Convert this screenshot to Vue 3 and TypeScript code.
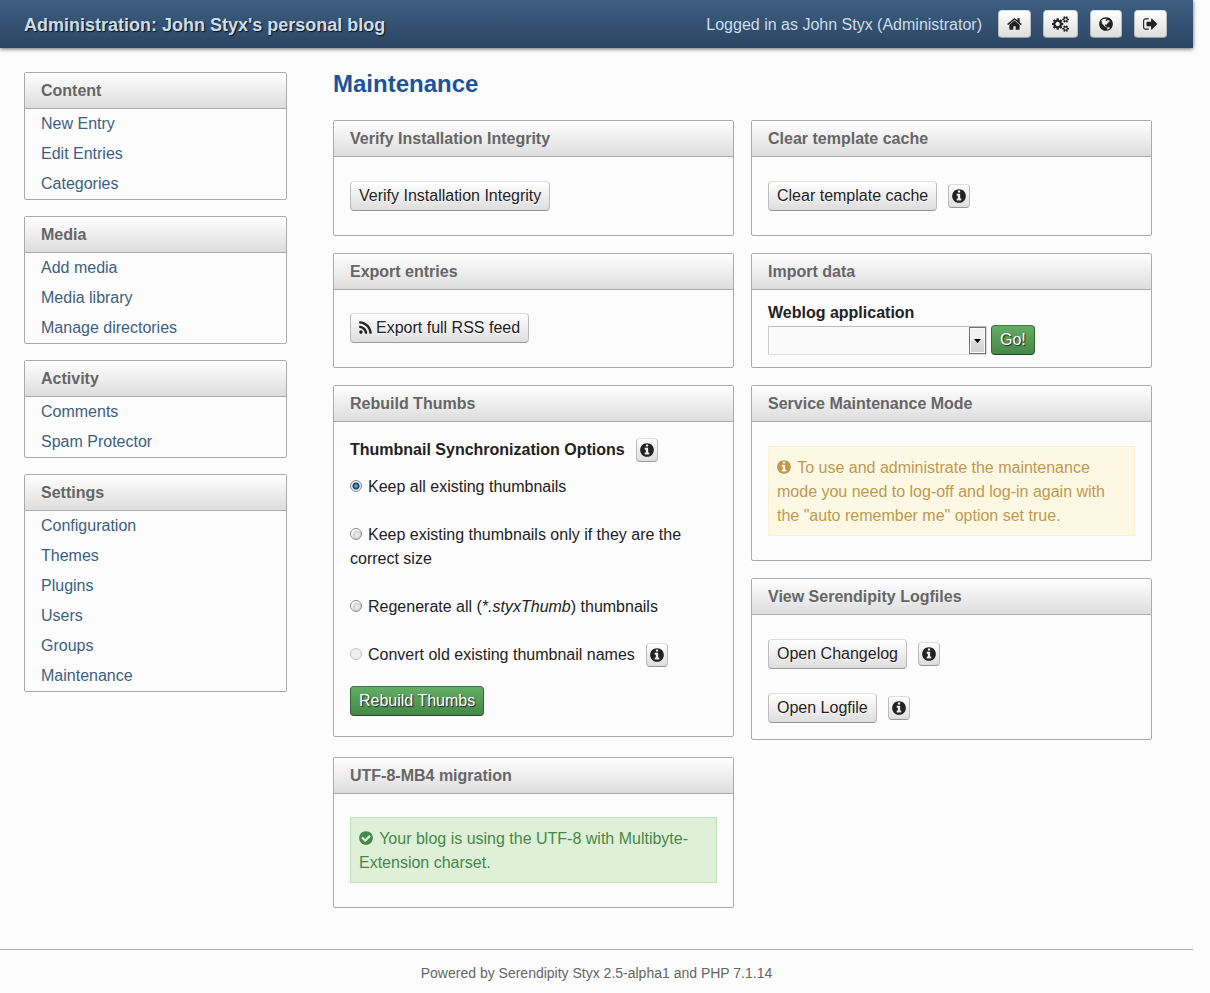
<script setup lang="ts">
import { ref } from 'vue'

interface Icon {
  box: string
  width: number
  d: string
}

const disc =
  'q0 209-103 385.5t-279.5 279.5-385.5 103-385.5-103-279.5-279.5-103-385.5 103-385.5 279.5-279.5 385.5-103 385.5 103 279.5 279.5 103 385.5z'
const smallCog =
  'v140q0 16-149 31-12 27-30 52 51 113 51 138 0 4-4 7-122 71-124 71-8 0-46-47t-52-68q-20 2-30 2t-30-2q-14 21-52 68t-46 47q-2 0-124-71-4-3-4-7 0-25 51-138-18-25-30-52-149-15-149-31v-140q0-16 149-31 13-29 30-52-51-113-51-138 0-4 4-7 4-2 35-20t59-34 30-16q8 0 46 46.5t52 67.5q20-2 30-2t30 2q51-71 92-112l6-2q4 0 124 70 4 3 4 7 0 25-51 138 17 23 30 52 149 15 149 31z'

const icons: Record<string, Icon> = {
  home: {
    box: '64 0 1664 1792',
    width: 15,
    d: 'M1472 992v480q0 26-19 45t-45 19h-384v-384h-256v384h-384q-26 0-45-19t-19-45v-480q0-1 .5-3t.5-3l575-474 575 474q1 2 1 6zm223-69l-62 74q-8 9-21 11h-3q-13 0-21-7l-692-577-692 577q-12 8-24 7-13-2-21-11l-62-74q-8-10-7-23.5t11-21.5l719-599q32-26 76-26t76 26l244 204v-195q0-14 9-23t23-9h192q14 0 23 9t9 23v408l219 182q10 8 11 21.5t-7 23.5z',
  },
  cogs: {
    box: '-64 0 1920 1792',
    width: 17,
    d:
      'M832 896q0-106-75-181t-181-75-181 75-75 181 75 181 181 75 181-75 75-181zm768 512q0-52-38-90t-90-38-90 38-38 90q0 53 37.5 90.5t90.5 37.5 90.5-37.5 37.5-90.5zm0-1024q0-52-38-90t-90-38-90 38-38 90q0 53 37.5 90.5t90.5 37.5 90.5-37.5 37.5-90.5zm-384 421v185q0 10-7 19.5t-16 10.5l-155 24q-11 35-32 76 34 48 90 115 7 11 7 20 0 12-7 19-23 30-82.5 89.5t-78.5 59.5q-11 0-21-7l-115-90q-37 19-77 31-11 108-23 155-7 24-30 24h-186q-11 0-20-7.5t-10-17.5l-23-153q-34-10-75-31l-118 89q-7 7-20 7-11 0-21-8-144-133-144-160 0-9 7-19 10-14 41-53t47-61q-23-44-35-82l-152-24q-10-1-17-9.5t-7-19.5v-185q0-10 7-19.5t16-10.5l155-24q11-35 32-76-34-48-90-115-7-11-7-20 0-12 7-20 22-30 82-89t79-59q11 0 21 7l115 90q34-18 77-32 11-108 23-154 7-24 30-24h186q11 0 20 7.5t10 17.5l23 153q34 10 75 31l118-89q8-7 20-7 11 0 21 8 144 133 144 160 0 8-7 19-12 16-42 54t-45 60q23 48 34 82l152 23q10 2 17 10.5t7 19.5z' +
      'M1856 1338' + smallCog + 'M1856 314' + smallCog,
  },
  globe: {
    box: '128 0 1536 1792',
    width: 14,
    d: 'M896 128q209 0 385.5 103t279.5 279.5 103 385.5-103 385.5-279.5 279.5-385.5 103-385.5-103-279.5-279.5-103-385.5 103-385.5 279.5-279.5 385.5-103zm274 521q-2 1-9.5 9.5t-13.5 9.5q2 0 4.5-5t5-11 3.5-7q6-7 22-15 14-6 52-12 34-8 51 11-2-2 9.5-13t14.5-12q3-2 15-4.5t15-7.5l2-22q-12 1-17.5-7t-6.5-21q0 2-6 8 0-7-4.5-8t-11.5 1-9 1q-10-3-15-7.5t-8-16.5-4-15q-2-5-9.5-11t-9.5-10q-1-2-2.5-5.5t-3-6.5-4-5.5-5.5-2.5-7 5-7.5 10-4.5 5q-3-2-6-1.5t-4.5 1-4.5 3-5 3.5q-3 2-8.5 3t-8.5 2q15-5-1-11-10-4-16-3 9-4 7.5-12t-8.5-14h5q-1-4-8.5-8.5t-17.5-8.5-13-6q-8-5-34-9.5t-33-.5q-5 6-4.5 10.5t4 14 3.5 12.5q1 6-5.5 13t-6.5 12q0 7 14 15.5t10 21.5q-3 8-16 16t-16 12q-5 8-1.5 18.5t10.5 16.5q2 2 1.5 4t-3.5 4.5-5.5 4-6.5 3.5l-3 2q-11 5-20.5-6t-13.5-26q-7-25-16-30-23-8-29 1-5-13-41-26-25-9-58-4 6-1 0-15-7-15-19-12 3-6 4-17.5t1-13.5q3-13 12-23 1-1 7-8.5t9.5-13.5.5-6q35 4 50-11 5-5 11.5-17t10.5-17q9-6 14-5.5t14.5 5.5 14.5 5q14 1 15.5-11t-7.5-20q12 1 3-17-4-7-8-9-12-4-27 5-8 4 2 8-1-1-9.5 10.5t-16.5 17.5-16-5q-1-1-5.5-13.5t-9.5-13.5q-8 0-16 15 3-8-11-15t-24-8q19-12-8-27-7-4-20.5-5t-19.5 4q-5 7-5.5 11.5t5 8 10.5 5.5 11.5 4 8.5 3q14 10 8 14-2 1-8.5 3.5t-11.5 4.5-6 4q-3 4 0 14t-2 14q-5-5-9-17.5t-7-16.5q7 9-25 6l-10-1q-4 0-16 2t-20.5 1-13.5-8q-4-8 0-20 1-4 4-2-4-3-11-9.5t-10-8.5q-46 15-94 41 6 1 12-1 5-2 13-6.5t10-5.5q34-14 42-7l5-5q14 16 20 25-7-4-30-1-20 6-22 12 7 12 5 18-4-3-11.5-10t-14.5-11-15-5q-16 0-22 1-146 80-235 222 7 7 12 8 4 1 5 9t2.5 11 11.5-3q9 8 3 19 1-1 44 27 19 17 21 21 3 11-10 18-1-2-9-9t-9-4q-3 5 .5 18.5t10.5 12.5q-7 0-9.5 16t-2.5 35.5-1 23.5l2 1q-3 12 5.5 34.5t21.5 19.5q-13 3 20 43 6 8 8 9 3 2 12 7.5t15 10 10 10.5q4 5 10 22.5t14 23.5q-2 6 9.5 20t10.5 23q-1 0-2.5 1t-2.5 1q3 7 15.5 14t15.5 13q1 3 2 10t3 11 8 2q2-20-24-62-15-25-17-29-3-5-5.5-15.5t-4.5-14.5q2 0 6 1.5t8.5 3.5 7.5 4 2 3q-3 7 2 17.5t12 18.5 17 19 12 13q6 6 14 19.5t0 13.5q9 0 20 10.5t17 19.5q5 8 8 26t5 24q2 7 8.5 13.5t12.5 9.5l16 8 13 7q5 2 18.5 10.5t21.5 11.5q10 4 16 4t14.5-2.5 13.5-3.5q15-2 29 15t21 21q36 19 55 11-2 1 .5 7.5t8 15.5 9 14.5 5.5 8.5q5 6 18 15t18 15q6-4 7-9-3 8 7 20t18 10q14-3 14-32-31 15-49-18 0-1-2.5-5.5t-4-8.5-2.5-8.5 0-7.5 5-3q9 0 10-3.5t-2-12.5-4-13q-1-8-11-20t-12-15q-5 9-16 8t-16-9q0 1-1.5 5.5t-1.5 6.5q-13 0-15-1 1-3 2.5-17.5t3.5-22.5q1-4 5.5-12t7.5-14.5 4-12.5-4.5-9.5-17.5-2.5q-19 1-26 20-1 3-3 10.5t-5 11.5-9 7q-7 3-24 2t-24-5q-13-8-22.5-29t-9.5-37q0-10 2.5-26.5t3-25-5.5-24.5q3-2 9-9.5t10-10.5q2-1 4.5-1.5t4.5 0 4-1.5 3-6q-1-1-4-3-3-3-4-3 7 3 28.5-1.5t27.5 1.5q15 11 22-2 0-1-2.5-9.5t-.5-13.5q5 27 29 9 3 3 15.5 5t17.5 5q3 2 7 5.5t5.5 4.5 5-.5 8.5-6.5q10 14 12 24 11 40 19 44 7 3 11 2t4.5-9.5 0-14-1.5-12.5l-1-8v-18l-1-8q-15-3-18.5-12t1.5-18.5 15-18.5q1-1 8-3.5t15.5-6.5 12.5-8q21-19 15-35 7 0 11-9-1 0-5-3t-7.5-5-4.5-2q9-5 2-16 5-3 7.5-11t7.5-10q9 12 21 2 8-8 1-16 5-7 20.5-10.5t18.5-9.5q7 2 8-2t1-12 3-12q4-5 15-9t13-5l17-11q3-4 0-4 18 2 31-11 10-11-6-20 3-6-3-9.5t-15-5.5q3-1 11.5-.5t10.5-1.5q15-10-7-16-17-5-43 12zm-163 877q206-36 351-189-3-3-12.5-4.5t-12.5-3.5q-18-7-24-8 1-7-2.5-13t-8-9-12.5-8-11-7q-2-2-7-6t-7-5.5-7.5-4.5-8.5-2-10 1l-3 1q-3 1-5.5 2.5t-5.5 3-4 3 0 2.5q-21-17-36-22-5-1-11-5.5t-10.5-7-10-1.5-11.5 7q-5 5-6 15t-2 13q-7-5 0-17.5t2-18.5q-3-6-10.5-4.5t-12 4.5-11.5 8.5-9 6.5-8.5 5.5-8.5 7.5q-3 4-6 12t-5 11q-2-4-11.5-6.5t-9.5-5.5q2 10 4 35t5 38q7 31-12 48-27 25-29 40-4 22 12 26 0 7-8 20.5t-7 21.5q0 6 2 16z',
  },
  signOut: {
    box: '64 0 1664 1792',
    width: 15,
    d: 'M704 1440q0 4 1 20t.5 26.5-3 23.5-10 19.5-20.5 6.5h-320q-119 0-203.5-84.5t-84.5-203.5v-704q0-119 84.5-203.5t203.5-84.5h320q13 0 22.5 9.5t9.5 22.5q0 4 1 20t.5 26.5-3 23.5-10 19.5-20.5 6.5h-320q-66 0-113 47t-47 113v704q0 66 47 113t113 47h312l11.5 1 11.5 3 8 5.5 7 9 2 13.5zm928-544q0 26-19 45l-544 544q-19 19-45 19t-45-19-19-45v-288h-448q-26 0-45-19t-19-45v-384q0-26 19-45t45-19h448v-288q0-26 19-45t45-19 45 19l544 544q19 19 19 45z',
  },
  rss: {
    box: '192 0 1408 1792',
    width: 13,
    d: 'M576 1344q0 80-56 136t-136 56-136-56-56-136 56-136 136-56 136 56 56 136zm512 123q2 28-17 48-18 21-47 21h-135q-25 0-43-16.5t-20-41.5q-22-229-184.5-391.5t-391.5-184.5q-25-2-41.5-20t-16.5-43v-135q0-29 21-47 17-17 43-17h5q160 13 306 80.5t259 181.5q114 113 181.5 259t80.5 306zm512 2q2 27-18 47-18 20-46 20h-143q-26 0-44.5-17.5t-19.5-42.5q-12-215-101-408.5t-231.5-336-336-231.5-408.5-102q-25-1-42.5-19.5t-17.5-43.5v-143q0-28 20-46 18-18 44-18h3q262 13 501.5 120t425.5 294q187 186 294 425.5t120 501.5z',
  },
  info: {
    box: '128 0 1536 1792',
    width: 14,
    d:
      'M1152 1376v-160q0-14-9-23t-23-9h-96v-512q0-14-9-23t-23-9h-320q-14 0-23 9t-9 23v160q0 14 9 23t23 9h96v320h-96q-14 0-23 9t-9 23v160q0 14 9 23t23 9h448q14 0 23-9t9-23zm-128-896v-160q0-14-9-23t-23-9h-192q-14 0-23 9t-9 23v160q0 14 9 23t23 9h192q14 0 23-9t9-23zm640 416' +
      disc,
  },
  check: {
    box: '128 0 1536 1792',
    width: 14,
    d:
      'M1412 734q0-28-18-46l-91-90q-19-19-45-19t-45 19l-408 407-226-226q-19-19-45-19t-45 19l-91 90q-18 18-18 46 0 27 18 45l362 362q19 19 45 19 27 0 46-19l543-543q18-18 18-45zm252 162' +
      disc,
  },
}

const userLinks = [
  { icon: icons.home, label: 'Startpage' },
  { icon: icons.cogs, label: 'Personal settings' },
  { icon: icons.globe, label: 'Back to blog' },
  { icon: icons.signOut, label: 'Logout' },
]

const menus = [
  { title: 'Content', items: ['New Entry', 'Edit Entries', 'Categories'] },
  { title: 'Media', items: ['Add media', 'Media library', 'Manage directories'] },
  { title: 'Activity', items: ['Comments', 'Spam Protector'] },
  {
    title: 'Settings',
    items: ['Configuration', 'Themes', 'Plugins', 'Users', 'Groups', 'Maintenance'],
  },
]

const thumbMode = ref('keep')
const importer = ref('')
</script>

<template>
  <div class="page">
    <header class="banner">
      <h1>Administration: John Styx's personal blog</h1>
      <nav class="user" aria-label="User">
        <span class="who">Logged in as John Styx (Administrator)</span>
        <a v-for="l in userLinks" :key="l.label" class="tool" href="#" :aria-label="l.label">
          <svg :width="l.icon.width" height="16" :viewBox="l.icon.box"><path :d="l.icon.d" /></svg>
        </a>
      </nav>
    </header>

    <div class="layout">
      <nav class="sidebar" aria-label="Administration">
        <section v-for="m in menus" :key="m.title" class="panel">
          <h2>{{ m.title }}</h2>
          <ul>
            <li v-for="i in m.items" :key="i"><a href="#">{{ i }}</a></li>
          </ul>
        </section>
      </nav>

      <main>
        <h2 class="heading">Maintenance</h2>
        <div class="columns">
          <div class="column">
            <section class="panel">
              <h2>Verify Installation Integrity</h2>
              <div class="body"><button type="button" class="btn">Verify Installation Integrity</button></div>
            </section>
            <section class="panel">
              <h2>Export entries</h2>
              <div class="body snug">
                <button type="button" class="btn">
                  <svg :width="icons.rss.width" height="16" :viewBox="icons.rss.box"><path :d="icons.rss.d" /></svg>
                  Export full RSS feed
                </button>
              </div>
            </section>
            <section class="panel">
              <h2>Rebuild Thumbs</h2>
              <form class="body thumbs" @submit.prevent>
                <div class="row" id="thumb-options">
                  <strong>Thumbnail Synchronization Options</strong>
                  <button type="button" class="info" aria-label="More about thumbnail options">
                    <svg :width="icons.info.width" height="16" :viewBox="icons.info.box"><path :d="icons.info.d" /></svg>
                  </button>
                </div>
                <div class="options" role="radiogroup" aria-labelledby="thumb-options">
                  <div>
                    <input id="t-keep" v-model="thumbMode" type="radio" name="thumbs" value="keep" />
                    <label for="t-keep">Keep all existing thumbnails</label>
                  </div>
                  <div>
                    <input id="t-size" v-model="thumbMode" type="radio" name="thumbs" value="size" />
                    <label for="t-size">Keep existing thumbnails only if they are the correct size</label>
                  </div>
                  <div>
                    <input id="t-all" v-model="thumbMode" type="radio" name="thumbs" value="all" />
                    <label for="t-all">Regenerate all (<em>*.styxThumb</em>) thumbnails</label>
                  </div>
                  <div class="row">
                    <span>
                      <input id="t-convert" v-model="thumbMode" type="radio" name="thumbs" value="convert" disabled />
                      <label for="t-convert">Convert old existing thumbnail names</label>
                    </span>
                    <button type="button" class="info" aria-label="More about converting names">
                      <svg :width="icons.info.width" height="16" :viewBox="icons.info.box"><path :d="icons.info.d" /></svg>
                    </button>
                  </div>
                </div>
                <button type="submit" class="btn go">Rebuild Thumbs</button>
              </form>
            </section>
            <section class="panel last">
              <h2>UTF-8-MB4 migration</h2>
              <div class="body snug">
                <p class="notice success">
                  <svg :width="icons.check.width" height="16" :viewBox="icons.check.box"><path :d="icons.check.d" /></svg>
                  Your blog is using the UTF-8 with Multibyte-Extension charset.
                </p>
              </div>
            </section>
          </div>

          <div class="column">
            <section class="panel">
              <h2>Clear template cache</h2>
              <div class="body row">
                <button type="button" class="btn">Clear template cache</button>
                <button type="button" class="info" aria-label="More about the template cache">
                  <svg :width="icons.info.width" height="16" :viewBox="icons.info.box"><path :d="icons.info.d" /></svg>
                </button>
              </div>
            </section>
            <section class="panel">
              <h2>Import data</h2>
              <form class="body import" @submit.prevent>
                <label for="importer">Weblog application</label>
                <div class="picker">
                  <span class="select">
                    <select id="importer" v-model="importer"><option value=""></option></select>
                    <span class="arrow" aria-hidden="true">
                      <svg width="7" height="4" viewBox="0 0 7 4"><path d="M0 0h7L3.5 4z" /></svg>
                    </span>
                  </span>
                  <button type="submit" class="btn go">Go!</button>
                </div>
              </form>
            </section>
            <section class="panel">
              <h2>Service Maintenance Mode</h2>
              <div class="body">
                <p class="notice hint">
                  <svg :width="icons.info.width" height="16" :viewBox="icons.info.box"><path :d="icons.info.d" /></svg>
                  To use and administrate the maintenance mode you need to log-off and log-in again with the "auto
                  remember me" option set true.
                </p>
              </div>
            </section>
            <section class="panel">
              <h2>View Serendipity Logfiles</h2>
              <div class="body logs">
                <div v-for="name in ['Open Changelog', 'Open Logfile']" :key="name" class="row">
                  <button type="button" class="btn">{{ name }}</button>
                  <button type="button" class="info" :aria-label="'About: ' + name">
                    <svg :width="icons.info.width" height="16" :viewBox="icons.info.box"><path :d="icons.info.d" /></svg>
                  </button>
                </div>
              </div>
            </section>
          </div>
        </div>
      </main>
    </div>

    <footer>Powered by Serendipity Styx 2.5-alpha1 and PHP 7.1.14</footer>
  </div>
</template>

<style>
body {
  background: #fcfcfc;
}
</style>

<style scoped>
.page {
  margin-right: 17px;
  color: #222;
  font: 16px/24px "Liberation Sans", Arial, sans-serif;
}
h1,
h2,
p,
ul {
  margin: 0;
  padding: 0;
}
svg {
  fill: currentColor;
}
.banner {
  display: flex;
  align-items: center;
  justify-content: space-between;
  height: 48px;
  padding: 0 26px 0 24px;
  background: linear-gradient(#3e5f82, #2a4562);
  box-shadow: 0 1px 4px #666;
  color: #cde;
}
h1,
.who {
  padding-top: 2px;
}
h1 {
  font-size: 18px;
  line-height: 24px;
  text-shadow: 1px 1px 1px #111;
}
.user {
  display: flex;
  align-items: center;
  gap: 12px;
}
.who {
  margin-right: 4px;
}
.tool,
.btn,
.info {
  display: inline-flex;
  box-sizing: border-box;
  align-items: center;
  justify-content: center;
  border: 1px solid #bbb;
  border-color: #ddd #bbb #999;
  border-radius: 4px;
  background: linear-gradient(#fff, #ddd);
  color: #222;
  font: inherit;
  text-shadow: 0 1px 1px #fff;
}
.tool {
  height: 28px;
  padding: 0 8px;
}
.btn {
  height: 30px;
  padding: 0 8px;
  gap: 4px;
}
.info {
  width: 22px;
  height: 24px;
  padding: 0;
}
.go {
  border-color: #3a7a3c #2f6631 #1d4a1f;
  background: linear-gradient(#62ad64, #468847);
  color: #fff;
  text-shadow: 1px 1px 1px #222;
}
.layout {
  display: grid;
  grid-template-columns: 263px minmax(0, 1fr);
  gap: 46px;
  align-items: start;
  padding: 24px 41px 41px 24px;
}
.sidebar {
  display: grid;
  gap: 16px;
}
.panel {
  border: 1px solid #aaa;
  border-radius: 2px;
}
.panel h2 {
  padding: 0 16px;
  border-bottom: 1px solid #aaa;
  background: linear-gradient(#fff, #ddd);
  color: #666;
  font-size: 16px;
  line-height: 35px;
}
.sidebar ul {
  list-style: none;
}
.sidebar li {
  padding: 0 16px;
  line-height: 30px;
}
.sidebar a {
  color: #3e5f81;
  text-decoration: none;
}
.heading {
  margin-bottom: 24px;
  color: #1c539c;
  font-size: 24px;
  line-height: 24px;
}
.columns {
  display: grid;
  grid-template-columns: repeat(2, minmax(0, 1fr));
  gap: 17px;
  align-items: start;
}
.column {
  display: flex;
  flex-direction: column;
  gap: 17px;
}
.last {
  margin-top: 3px;
}
.body {
  display: flex;
  align-items: flex-start;
  padding: 24px 16px;
}
.snug {
  padding: 23px 16px 24px;
}
.row {
  display: flex;
  align-items: center;
  gap: 11px;
}
.thumbs {
  flex-direction: column;
  padding: 16px 16px 20px;
}
.options {
  display: grid;
  gap: 24px;
  margin: 13px 0 19px;
}
input[type="radio"] {
  appearance: none;
  box-sizing: border-box;
  width: 12px;
  height: 12px;
  margin: 0 6px 0 0;
  border: 1px solid #8a8a8a;
  border-radius: 50%;
  background: radial-gradient(circle at 60% 60%, #f4f4f4, #cfcfcf 4px, #fff 5px);
}
input[type="radio"]:checked {
  background: radial-gradient(circle at 50% 50%, #6cc8f0 0, #1b6ea5 2px, #123a5c 3px, #eee 4px);
}
input[type="radio"]:disabled {
  border-color: #c4c4c4;
  background: #eee;
}
.import {
  flex-direction: column;
  padding: 11px 16px 12px;
}
.import label {
  font-weight: bold;
}
.picker {
  display: flex;
  align-items: flex-end;
  gap: 4px;
}
.select {
  position: relative;
  display: flex;
}
select {
  appearance: none;
  width: 219px;
  height: 29px;
  border: 1px solid #ddd;
  border-top-color: #bbb;
  border-left-color: #ccc;
  border-radius: 0;
  background: #fafafa;
  font: inherit;
}
.arrow {
  position: absolute;
  top: 1px;
  right: 1px;
  bottom: 1px;
  display: flex;
  box-sizing: border-box;
  align-items: center;
  justify-content: center;
  width: 17px;
  border: 1px solid #707070;
  background: linear-gradient(#f2f2f2 45%, #dcdcdc 55%, #d0d0d0);
  box-shadow: inset 0 0 0 1px #fafafa;
  color: #000;
  pointer-events: none;
}
.notice {
  flex: 1;
  padding: 9px 8px 7px;
  border: 1px solid;
}
.notice svg {
  margin-right: 2px;
  vertical-align: -2px;
}
.hint {
  border-color: #fbeed5;
  background: #fcf8e3;
  color: #c09853;
}
.success {
  border-color: #bfe3b2;
  background: #dff0d8;
  color: #468847;
}
.logs {
  flex-direction: column;
  gap: 24px;
  padding-bottom: 16px;
}
footer {
  padding: 11px 0 8px;
  border-top: 1px solid #aaa;
  color: #666;
  font-size: 14px;
  text-align: center;
}
</style>
